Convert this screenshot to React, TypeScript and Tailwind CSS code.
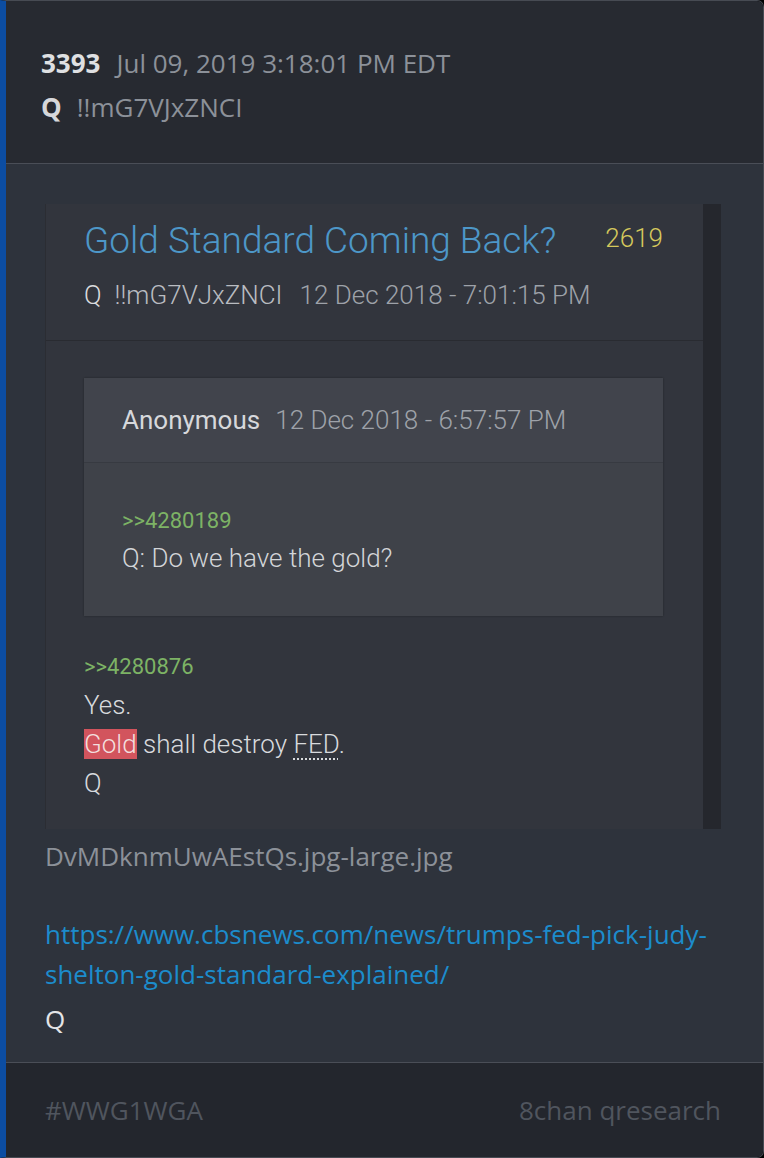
export default function App() {
  return (
    <main className="w-[764px] h-[1158px] bg-black overflow-hidden">
      <div
        className="h-full flex flex-col border-y border-r border-[#474b53] border-l-[6px] border-l-[#0c4da2] rounded-r-[7px] overflow-hidden"
        style={{ fontFamily: '"Open Sans", sans-serif' }}
      >
        {/* Header */}
        <div className="bg-[#272a31] pl-[35px] pt-[40px] pb-[34px] border-b border-[#4a4e57] text-[26px] leading-[44px]">
          <div className="flex gap-[16px]">
            <span className="font-bold text-[#dfe0e2]">3393</span>
            <span className="text-[#8c9199]">Jul 09, 2019 3:18:01 PM EDT</span>
          </div>
          <div className="flex gap-[15px]">
            <span className="font-bold text-[#d6d7da]">Q</span>
            <span className="text-[#8c9199]">!!mG7VJxZNCI</span>
          </div>
        </div>

        {/* Body */}
        <div className="flex-1 bg-[#2e333c] pl-[39px] pr-[42px] pt-[40px]">
          {/* Quoted post */}
          <div
            className="flex h-[625px] bg-[#32353d] border-l border-[#2b2d33]"
            style={{ fontFamily: 'Roboto, sans-serif' }}
          >
            <div className="flex-1 flex flex-col font-light">
              <div className="pl-[38px] pr-[40px] pt-[15px] pb-[25px] border-b border-[#292b31]">
                <div className="flex justify-between items-start">
                  <span className="text-[37px] leading-[44px] text-[#4d97c8]">
                    Gold Standard Coming Back?
                  </span>
                  <span className="text-[26px] leading-[38px] text-[#d5c85c]">2619</span>
                </div>
                <div className="mt-[12px] text-[26px] leading-[40px] flex gap-[13px]">
                  <span className="text-[#dadbdd]">Q</span>
                  <span className="text-[#b9bcc1]">!!mG7VJxZNCI</span>
                  <span className="text-[#9ea2a9] ml-[4px]">12 Dec 2018 - 7:01:15 PM</span>
                </div>
              </div>

              <div className="flex-1 pl-[38px] pr-[40px] pt-[37px] pb-[25px]">
                {/* Nested post */}
                <div className="bg-[#3f4249] shadow-[0_0_2px_rgba(0,0,0,0.35)]">
                  <div className="h-[85px] bg-[#41444c] flex items-center pl-[38px] gap-[15px] text-[26px] border-b border-[#373a41]">
                    <span className="font-normal text-[#d6d8db]">Anonymous</span>
                    <span className="text-[#9ea2a9]">12 Dec 2018 - 6:57:57 PM</span>
                  </div>
                  <div className="pl-[38px] pt-[40px] pb-[39px]">
                    <div className="text-[22px] leading-[36px] text-[#7db365] font-normal">&gt;&gt;4280189</div>
                    <div className="text-[26px] leading-[38px] text-[#d3d5d8]">Q: Do we have the gold?</div>
                  </div>
                </div>

                <div className="mt-[32px] text-[22px] leading-[38px] text-[#7db365] font-normal">&gt;&gt;4280876</div>
                <div className="text-[26px] leading-[39px] text-[#d8dadd]">
                  <div>Yes.</div>
                  <div>
                    <span className="bg-[#d2545d] text-[#f3dede]">Gold</span> shall destroy{' '}
                    <span className="underline decoration-dotted decoration-[1.5px] underline-offset-[5px]">FED</span>.
                  </div>
                  <div>Q</div>
                </div>
              </div>
            </div>
            <div className="w-[18px] bg-[#25272d]" />
          </div>

          <div className="mt-[7px] text-[26px] leading-[40px] text-[#8c9199]">DvMDknmUwAEstQs.jpg-large.jpg</div>
          <div className="mt-[38px] text-[26px] leading-[40px] text-[#1c8ccc] break-words">
            https://www.cbsnews.com/news/trumps-fed-pick-judy-shelton-gold-standard-explained/
          </div>
          <div className="mt-[5px] text-[26px] leading-[40px] text-[#e4e5e7]">Q</div>
        </div>

        {/* Footer */}
        <div className="h-[95px] shrink-0 bg-[#23262d] border-t border-[#4a4e57] flex items-center justify-between pl-[39px] pr-[42px] text-[26px] text-[#50555e]">
          <span>#WWG1WGA</span>
          <span>8chan qresearch</span>
        </div>
      </div>
    </main>
  );
}
